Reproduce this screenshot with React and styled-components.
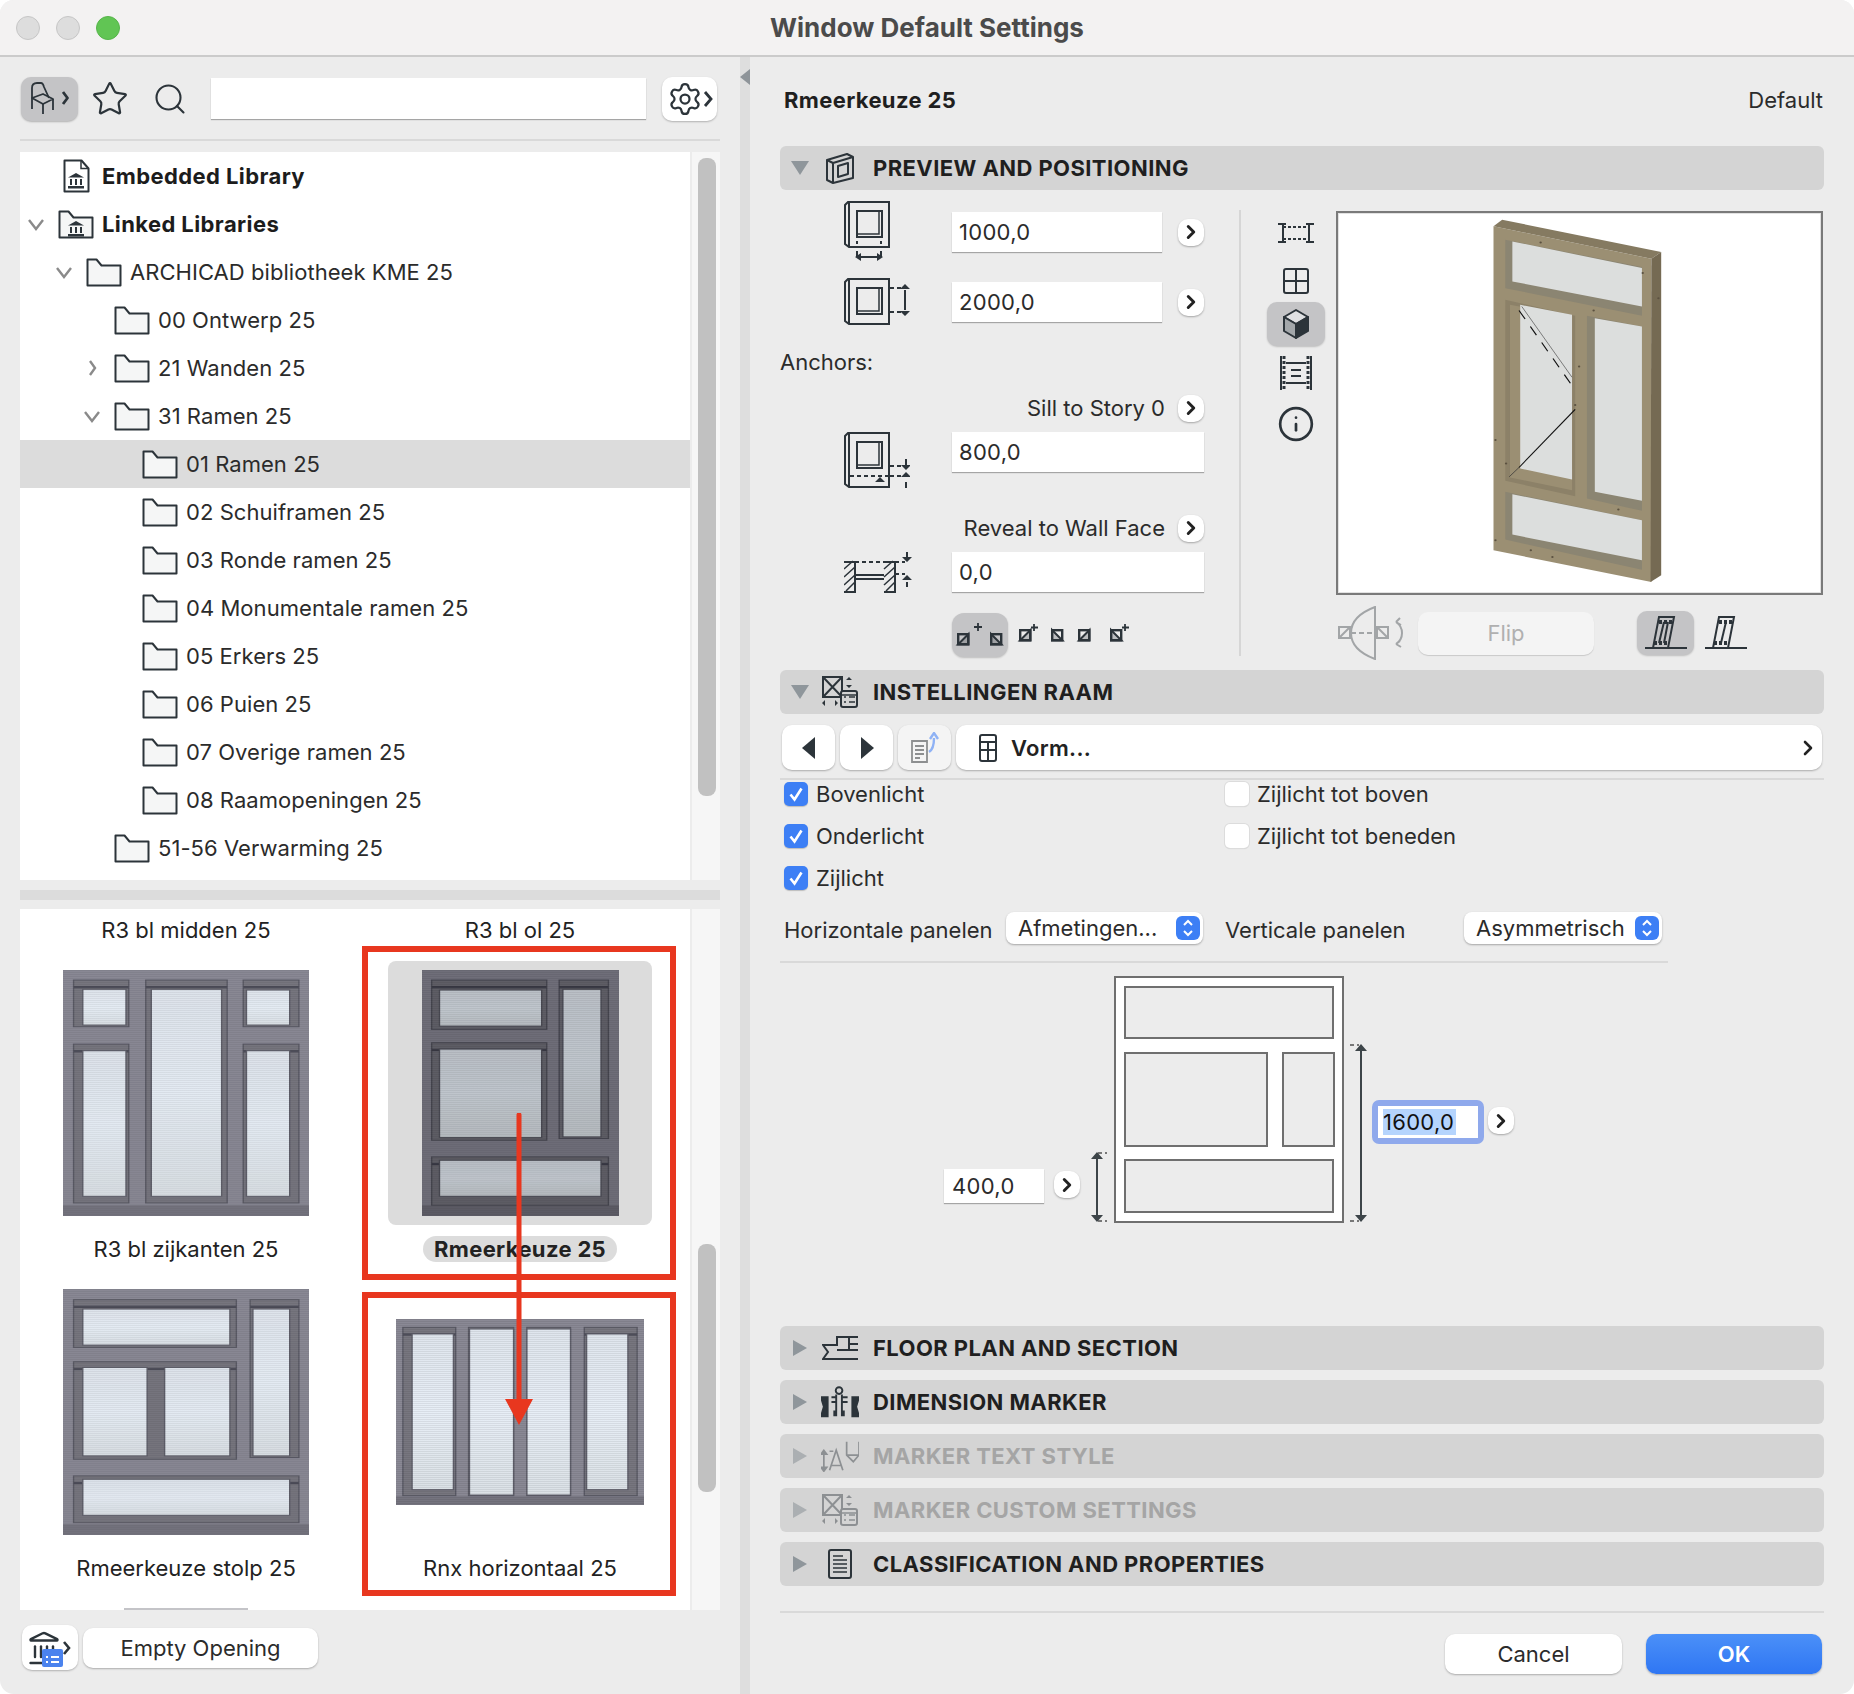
import React from 'react';
import styled, { createGlobalStyle } from 'styled-components';
import { Star, Search, Settings, ChevronRight, Info, Landmark } from 'lucide-react';

const INK = '#2c343a';

const GlobalStyle = createGlobalStyle`
  html, body { margin: 0; padding: 0; background: #fff; }
  body { font-family: Inter, "Noto Sans", "Liberation Sans", sans-serif; color: #262626; }
  * { box-sizing: border-box; }
`;

const Win = styled.div`
  width: 1854px;
  height: 1694px;
  background: #ececec;
  border-radius: 14px;
  overflow: hidden;
  display: flex;
  flex-direction: column;
`;

const TitleBar = styled.header`
  height: 57px;
  flex: none;
  display: grid;
  grid-template-columns: 1fr auto 1fr;
  align-items: center;
  padding: 0 16px;
  background: #f3f2f2;
  border-bottom: 2px solid #cbcbcb;
`;

const Lights = styled.div`
  display: flex;
  gap: 16px;
`;

const Light = styled.span`
  width: 24px;
  height: 24px;
  border-radius: 50%;
  background: ${(p) => (p.$green ? '#61c554' : '#dddddd')};
  border: 1px solid ${(p) => (p.$green ? '#56b54a' : '#c6c6c6')};
`;

const WinTitle = styled.h1`
  margin: 0;
  font-size: 26px;
  font-weight: 700;
  color: #4b4b4b;
`;

const Main = styled.div`
  flex: 1;
  display: flex;
  min-height: 0;
`;

const LeftPanel = styled.aside`
  width: 740px;
  flex: none;
  padding: 20px 20px 0;
  display: flex;
  flex-direction: column;
`;

const Toolbar = styled.div`
  display: flex;
  align-items: center;
  height: 43px;
`;

const IconButton = styled.div`
  flex: none;
  display: flex;
  align-items: center;
  justify-content: center;
  width: ${(p) => p.$w || 58}px;
  height: ${(p) => p.$h || 44}px;
  margin-left: ${(p) => p.$ml || 0}px;
  border-radius: 10px;
  background: ${(p) => (p.$on ? '#c4c4c6' : '#fff')};
  box-shadow: 0 1px 2px rgba(0, 0, 0, 0.25);
`;

const ToolSlot = styled.div`
  flex: none;
  width: ${(p) => p.$w}px;
  display: flex;
  justify-content: center;
  color: ${INK};
`;

const SearchField = styled.input`
  flex: none;
  width: 435px;
  height: 41px;
  margin: 0 16px 0 13px;
  border: 0;
  background: #fff;
  box-shadow: 0 1px 1px rgba(0, 0, 0, 0.3);
`;

const Rule = styled.div`
  height: 2px;
  background: #d9d9d9;
  width: ${(p) => p.$w || '100%'};
  margin-top: ${(p) => p.$mt || 0}px;
  flex: none;
`;

const ListBlock = styled.div`
  display: flex;
  flex: none;
  height: ${(p) => p.$h}px;
  margin-top: ${(p) => p.$mt}px;
`;

const TreeList = styled.div`
  width: 670px;
  background: #fff;
`;

const TreeRowBox = styled.div`
  height: 48px;
  display: flex;
  align-items: center;
  padding-left: ${(p) => 8 + p.$level * 28}px;
  background: ${(p) => (p.$selected ? '#dcdcdc' : 'transparent')};
`;

const Twisty = styled.div`
  width: 30px;
  flex: none;
  display: flex;
`;

const TreeIcon = styled.div`
  width: 36px;
  margin-right: 8px;
  flex: none;
  display: flex;
  justify-content: center;
`;

const TreeLabel = styled.span`
  font-size: 22px;
  font-weight: ${(p) => (p.$bold ? 700 : 400)};
  letter-spacing: ${(p) => (p.$bold ? '0.4px' : '0.05px')};
  color: ${(p) => (p.$bold ? '#1c1c1c' : '#2b2b2b')};
  white-space: nowrap;
`;

const ScrollTrack = styled.div`
  width: 28px;
  margin-left: 2px;
  padding: 0 4px 0 6px;
  background: #f6f6f6;
`;

const ScrollThumb = styled.div`
  height: ${(p) => p.$h}px;
  margin-top: ${(p) => p.$top}px;
  border-radius: 8px;
  background: #c1c1c1;
`;

const Band = styled.div`
  height: 10px;
  flex: none;
  margin-top: 10px;
  background: #dcdcdc;
`;

const GridPanel = styled.div`
  position: relative;
  width: 670px;
  overflow: hidden;
  background: #fff;
  padding-top: 8px;
  display: grid;
  grid-template-columns: 332px 336px;
  row-gap: 18px;
  align-content: start;
`;

const Cell = styled.div`
  display: flex;
  flex-direction: column;
  align-items: center;
`;

const ThumbArea = styled.div`
  width: 264px;
  height: 264px;
  margin-bottom: 11px;
  border-radius: 8px;
  display: flex;
  align-items: center;
  justify-content: center;
  background: ${(p) => (p.$selected ? '#dcdcdc' : 'transparent')};
`;

const Caption = styled.span`
  height: 26px;
  line-height: 27px;
  padding: 0 11px;
  border-radius: 13px;
  font-size: 22px;
  white-space: nowrap;
  font-weight: ${(p) => (p.$selected ? 700 : 400)};
  letter-spacing: ${(p) => (p.$selected ? '0.35px' : '0')};
  background: ${(p) => (p.$selected ? '#dcdcdc' : 'transparent')};
  color: #222;
`;

const ThumbSvg = styled.svg`
  filter: ${(p) => (p.$dark ? 'brightness(0.82) contrast(1.08)' : 'none')};
`;

const PeekThumb = styled.div`
  width: 124px;
  height: 3px;
  margin-top: 9px;
  background: #c4c4c8;
`;

const RedBox = styled.div`
  position: absolute;
  left: 342px;
  top: ${(p) => p.$top}px;
  width: 314px;
  height: ${(p) => p.$h}px;
  border: 6px solid #e8371f;
`;

const RedArrow = styled.svg`
  position: absolute;
  left: 485px;
  top: 204px;
`;

const BottomBar = styled.div`
  display: flex;
  align-items: center;
  gap: 5px;
  margin-top: 15px;
  padding-left: 2px;
`;

const PlainButton = styled.div`
  flex: none;
  width: ${(p) => p.$w}px;
  height: 40px;
  display: flex;
  align-items: center;
  justify-content: center;
  border-radius: 10px;
  background: #fff;
  box-shadow: 0 1px 2px rgba(0, 0, 0, 0.28);
  font-size: 22px;
  color: #2b2b2b;
`;

const Splitter = styled.div`
  width: 10px;
  flex: none;
  background: #dedede;
  padding-top: 12px;
`;

const SplitterArrow = styled.div`
  width: 0;
  height: 0;
  border-top: 8px solid transparent;
  border-bottom: 8px solid transparent;
  border-right: 10px solid #8e9499;
`;

const RightPanel = styled.main`
  flex: 1;
  padding: 21px 30px 0;
  min-width: 0;
`;

const TopRow = styled.div`
  height: 44px;
  display: flex;
  align-items: center;
  justify-content: space-between;
  padding: 0 1px 0 4px;
  margin-bottom: 24px;
`;

const ElementName = styled.span`
  font-size: 22px;
  font-weight: 700;
  letter-spacing: 0.35px;
  color: #1f1f1f;
`;

const DefaultTag = styled.span`
  font-size: 22px;
  color: #2b2b2b;
`;

const SectionBar = styled.div`
  height: 44px;
  display: flex;
  align-items: center;
  border-radius: 6px;
  background: #d4d4d4;
  margin-top: ${(p) => p.$mt || 0}px;
`;

const Triangle = styled.span`
  flex: none;
  width: 0;
  height: 0;
  ${(p) =>
    p.$open
      ? `margin-left: 11px; margin-right: 13px;
         border-left: 9px solid transparent; border-right: 9px solid transparent;
         border-top: 14px solid #8f969b;`
      : `margin-left: 13px; margin-right: 15px;
         border-top: 8px solid transparent; border-bottom: 8px solid transparent;
         border-left: 14px solid #8f969b;`}
  opacity: ${(p) => (p.$off ? 0.6 : 1)};
`;

const SectionIcon = styled.div`
  width: 38px;
  flex: none;
  margin-right: 14px;
  margin-left: -1px;
  display: flex;
  justify-content: center;
  opacity: ${(p) => (p.$off ? 0.42 : 1)};
`;

const SectionTitle = styled.span`
  font-size: 22px;
  font-weight: 700;
  letter-spacing: 0.42px;
  white-space: nowrap;
  color: ${(p) => (p.$off ? '#a5a5a5' : '#1f1f1f')};
`;

const PreviewBody = styled.div`
  height: 480px;
  display: flex;
`;

const FieldsColumn = styled.div`
  width: 459px;
  flex: none;
  display: flex;
  flex-direction: column;
  padding-top: 11px;
`;

const FieldRow = styled.div`
  display: flex;
  align-items: ${(p) => p.$align || 'center'};
  height: ${(p) => p.$h}px;
  margin-top: ${(p) => p.$mt || 0}px;
  padding-left: 64px;
`;

const FieldIcon = styled.div`
  width: 108px;
  flex: none;
  display: flex;
`;

const ValueField = styled.div`
  flex: none;
  width: ${(p) => p.$w}px;
  height: ${(p) => p.$h || 40}px;
  padding: 0 ${(p) => p.$pad || 7}px;
  display: flex;
  align-items: center;
  background: #fff;
  box-shadow: 0 1px 1px rgba(0, 0, 0, 0.3);
  font-size: 22px;
  letter-spacing: 0.3px;
  color: #2b2b2b;
`;

const RoundChevron = styled.div`
  flex: none;
  width: 26px;
  height: 27px;
  margin-left: ${(p) => p.$ml || 0}px;
  display: flex;
  align-items: center;
  justify-content: center;
  border-radius: 10px;
  background: #fff;
  color: #222;
  box-shadow: 0 1px 2px rgba(0, 0, 0, 0.3);
`;

const PlainLabel = styled.div`
  font-size: 22px;
  color: #2b2b2b;
  height: 24px;
  line-height: 24px;
  margin-top: 24px;
`;

const AnchorLabelRow = styled.div`
  display: flex;
  align-items: center;
  justify-content: flex-end;
  height: 28px;
  margin-top: ${(p) => p.$mt}px;
  width: 424px;
  font-size: 22px;
  color: #2b2b2b;
`;

const AnchorButtons = styled.div`
  display: flex;
  align-items: center;
  margin: 21px 0 0 172px;
  height: 44px;
`;

const AnchorOn = styled.div`
  width: 56px;
  height: 44px;
  display: flex;
  align-items: center;
  justify-content: center;
  background: #c4c4c6;
  border-radius: 12px;
  box-shadow: 0 1px 2px rgba(0, 0, 0, 0.2);
  margin-right: 2px;
`;

const AnchorSlot = styled.div`
  width: ${(p) => p.$w}px;
  margin-left: ${(p) => p.$ml || 0}px;
  display: flex;
  justify-content: center;
`;

const VerticalRule = styled.div`
  width: 2px;
  height: 446px;
  margin-top: 20px;
  background: #d6d6d6;
  flex: none;
`;

const PreviewSide = styled.div`
  flex: 1;
  padding: 21px 0 0 26px;
`;

const PreviewTop = styled.div`
  display: flex;
  gap: 11px;
`;

const ViewStrip = styled.div`
  width: 58px;
  flex: none;
`;

const ViewSlot = styled.div`
  height: 44px;
  width: ${(p) => (p.$w ? `${p.$w}px` : 'auto')};
  margin-top: ${(p) => p.$mt || 0}px;
  display: flex;
  align-items: center;
  justify-content: center;
  border-radius: 10px;
  color: ${INK};
  background: ${(p) => (p.$on ? '#c4c4c6' : 'transparent')};
  box-shadow: ${(p) => (p.$on ? '0 1px 2px rgba(0,0,0,.2)' : 'none')};
`;

const PreviewBox = styled.div`
  width: 487px;
  height: 384px;
  border: 2px solid #7a7a7a;
  background: #fff;
  box-shadow: inset 0 0 0 1px #e2e2e2;
  flex: none;
`;

const FlipRow = styled.div`
  display: flex;
  align-items: center;
  height: 54px;
  margin: 11px 0 0 71px;
`;

const FlipButton = styled.div`
  width: 176px;
  height: 43px;
  margin: 0 43px 0 14px;
  display: flex;
  align-items: center;
  justify-content: center;
  border-radius: 10px;
  background: #f4f4f4;
  box-shadow: 0 1px 1px rgba(0, 0, 0, 0.15);
  color: #b0b0b0;
  font-size: 22px;
`;

const NavRow = styled.div`
  display: flex;
  gap: 5px;
  height: 45px;
  margin-top: 11px;
  padding: 0 2px;
`;

const NavButton = styled.div`
  width: 53px;
  flex: none;
  display: flex;
  align-items: center;
  justify-content: center;
  border-radius: 10px;
  background: ${(p) => (p.$dim ? '#f4f4f4' : '#fff')};
  box-shadow: 0 1px 2px rgba(0, 0, 0, 0.28);
`;

const NavWide = styled.div`
  flex: 1;
  display: flex;
  align-items: center;
  padding: 0 2px 0 23px;
  border-radius: 10px;
  background: #fff;
  box-shadow: 0 1px 2px rgba(0, 0, 0, 0.28);
  font-size: 22px;
  font-weight: 600;
  letter-spacing: 0.3px;
  color: #222;
`;

const NavWideText = styled.span`
  flex: 1;
  margin-left: 14px;
`;

const CheckGrid = styled.div`
  display: grid;
  grid-template-columns: 441px 1fr;
  grid-auto-rows: 24px;
  row-gap: 18px;
  margin-top: 2px;
  padding-left: 4px;
`;

const CheckRow = styled.label`
  display: flex;
  align-items: center;
  gap: 8px;
  font-size: 22px;
  color: #2b2b2b;
`;

const CheckBox = styled.span`
  width: 24px;
  height: 24px;
  flex: none;
  border-radius: 5px;
  display: flex;
  align-items: center;
  justify-content: center;
  background: ${(p) => (p.$on ? '#3d7ff5' : '#fff')};
  box-shadow: ${(p) => (p.$on ? '0 1px 1px rgba(0,0,0,.2)' : '0 0 0 1px #dcdcdc, 0 1px 1px rgba(0,0,0,.15)')};
`;

const PanelsRow = styled.div`
  display: flex;
  align-items: flex-start;
  height: 32px;
  margin-top: 22px;
  padding-left: 4px;
`;

const PanelsLabel = styled.span`
  width: ${(p) => p.$w}px;
  flex: none;
  padding-top: 5px;
  font-size: 22px;
  white-space: nowrap;
  color: #2b2b2b;
`;

const SelectBox = styled.div`
  flex: none;
  width: ${(p) => p.$w}px;
  height: 32px;
  margin-right: 22px;
  display: flex;
  align-items: center;
  justify-content: space-between;
  padding: 0 3px 0 12px;
  border-radius: 8px;
  background: #fff;
  box-shadow: 0 1px 2px rgba(0, 0, 0, 0.3);
  font-size: 22px;
  color: #2b2b2b;
  white-space: nowrap;
`;

const Stepper = styled.span`
  width: 24px;
  height: 24px;
  flex: none;
  display: flex;
  align-items: center;
  justify-content: center;
  border-radius: 6px;
  background: #3d7ff5;
`;

const DiagramCanvas = styled.div`
  position: relative;
  height: 363px;
`;

const DiagramArt = styled.svg`
  position: absolute;
  left: 0;
  top: 0;
`;

const CanvasItem = styled.div`
  position: absolute;
  left: ${(p) => p.$x}px;
  top: ${(p) => p.$y}px;
`;

const FocusRing = styled.div`
  width: 112px;
  height: 44px;
  padding: 6px;
  border-radius: 7px;
  background: #8fa9ec;
`;

const FocusInner = styled.div`
  height: 100%;
  padding-left: 5px;
  display: flex;
  align-items: center;
  background: #fff;
  font-size: 22px;
`;

const SelectedText = styled.span`
  background: #b5d4fd;
  color: #111;
  padding-right: 2px;
  letter-spacing: 0.3px;
`;

const SectionStack = styled.div`
  display: flex;
  flex-direction: column;
  gap: 10px;
`;

const Footer = styled.div`
  display: flex;
  justify-content: flex-end;
  gap: 24px;
  margin-top: 21px;
  padding-right: 2px;
`;

const CancelButton = styled.div`
  width: 177px;
  height: 40px;
  display: flex;
  align-items: center;
  justify-content: center;
  border-radius: 10px;
  background: #fff;
  box-shadow: 0 1px 2px rgba(0, 0, 0, 0.28);
  font-size: 22px;
  color: #2b2b2b;
`;

const OkButton = styled(CancelButton)`
  width: 176px;
  background: linear-gradient(#4b90f8, #2f76f3);
  color: #fff;
  font-weight: 600;
`;

const LibraryWrap = styled.div`
  position: relative;
  display: flex;
  align-items: center;
  margin-left: -2px;
`;

const LibraryCard = styled.svg`
  position: absolute;
  left: 16px;
  top: 19px;
`;

const Chevron = ({ dir }) => (
  <svg width="16" height="16" viewBox="0 0 16 16" fill="none" stroke="#8a8a8a" strokeWidth="2.400">
    {dir === 'down' ? <path d="M1 4l7 9 7-9" /> : <path d="M6 1l5 7-5 7" />}
  </svg>
);

const BankMark = ({ x, y }) => (
  <g transform={`translate(${x} ${y})`} fill={INK} stroke="none">
    <path d="M8 0l8 4.500H0z" />
    <rect x="2" y="6" width="2" height="6" />
    <rect x="7" y="6" width="2" height="6" />
    <rect x="12" y="6" width="2" height="6" />
    <rect x="0" y="13" width="16" height="2.500" />
  </g>
);

const FolderIcon = ({ bank }) => (
  <svg width="36" height="29" viewBox="0 0 36 29">
    <path
      d="M1.500 27.500V1.500h9l5 6h19v20z"
      fill="#f5f6f6"
      stroke={INK}
      strokeWidth="2"
      strokeLinejoin="round"
    />
    {bank && <BankMark x={10} y={11} />}
  </svg>
);

const DocBankIcon = () => (
  <svg width="27" height="34" viewBox="0 0 27 34">
    <path d="M1.500 1.500h17l7 8v23h-24z" fill="#fff" stroke={INK} strokeWidth="2" strokeLinejoin="round" />
    <path d="M18 1.500v8h7.500" fill="none" stroke={INK} strokeWidth="1.500" />
    <BankMark x={5} y={14} />
  </svg>
);

const ChairIcon = () => (
  <svg width="40" height="33" viewBox="0 0 40 33" fill="none" stroke={INK} strokeWidth="1.800" strokeLinejoin="round">
    <path d="M2 27V6q0-5 5-5h4q2 0 3 4l5 11" />
    <path d="M2 16l11-4 10 5-10 5z" />
    <path d="M13 22v10M23 17v11" />
    <path d="M33 10l4.500 6-4.500 6" strokeWidth="2.800" />
  </svg>
);

const GearMore = () => (
  <>
    <Settings size={36} strokeWidth={1.5} color={INK} />
    <svg width="10" height="18" viewBox="0 0 10 18" fill="none" stroke={INK} strokeWidth="2.800">
      <path d="M2 2l6 7-6 7" />
    </svg>
  </>
);

const BoxShape = ({ h = 46 }) => (
  <g fill="none" stroke={INK} strokeWidth="2">
    <path d={`M1 4l3-3h41v${h - 1}H5l-4-3z`} />
    <path d={`M5 1v${h - 1}`} />
    <rect x="13" y="10" width="25" height="26" />
    <path d="M14 33h21V11" strokeWidth="1.500" />
  </g>
);

const WidthIcon = () => (
  <svg width="46" height="62" viewBox="0 0 46 62">
    <BoxShape />
    <g stroke={INK} strokeWidth="2" fill="none">
      <path d="M13 40v3M37 40v3M13 50v6M37 50v6M15 56h20" />
    </g>
    <path d="M11 56l6-4v8zM39 56l-6-4v8z" fill={INK} />
  </svg>
);

const HeightIcon = () => (
  <svg width="66" height="48" viewBox="0 0 66 48">
    <BoxShape />
    <g stroke={INK} strokeWidth="2" fill="none">
      <path d="M46 10h14M46 34h14" strokeDasharray="4 3" />
      <path d="M61 12v20" />
    </g>
    <path d="M61 6l-5 5h10zM61 38l-5-5h10z" fill={INK} />
  </svg>
);

const SillIcon = () => (
  <svg width="66" height="56" viewBox="0 0 66 56">
    <g fill="none" stroke={INK} strokeWidth="2">
      <path d="M1 4l3-3h41v54H5l-4-3z" />
      <path d="M5 1v54" />
      <rect x="13" y="10" width="25" height="26" />
      <path d="M14 33h21V11" strokeWidth="1.500" />
      <path d="M6 44h38M46 34h12M46 44h12" strokeDasharray="4 3" />
      <path d="M62 27v6M62 50v6" />
    </g>
    <path d="M62 38l-5-5h10zM62 40l-5 5h10zM31 50l5-5 5 5z" fill={INK} />
  </svg>
);

const RevealIcon = () => (
  <svg width="68" height="42" viewBox="0 0 68 42">
    <g fill="none" stroke={INK} strokeWidth="2">
      <path d="M0 11h11v30H0M40 11h11v30H40M11 24h29M11 28h29" />
      <path d="M0 18l9-8M0 26l11-10M0 34l11-10M2 40l9-9M40 18l9-8M40 26l11-10M40 34l11-10M42 40l9-9" strokeWidth="1.500" />
      <path d="M11 11h29M51 11h10M51 23h10" strokeDasharray="4 3" />
      <path d="M63 1v5M63 31v5" />
    </g>
    <path d="M63 11l-5-5h10zM63 24l-5 5h10z" fill={INK} />
  </svg>
);

const HatchSquare = ({ x, flip }) => (
  <g transform={`translate(${x} 0)`} stroke={INK} strokeWidth="2.400" fill="none">
    <rect x="1.200" y="1.200" width="10" height="10" />
    <path d={flip ? 'M1 11.500L11.500 1L11.500 11.500z' : 'M1 1l10.500 10.500H1z'} fill={INK} fillOpacity="0.25" strokeWidth="2" />
  </g>
);

const AnchorPair = () => (
  <svg width="50" height="24" viewBox="0 0 50 24">
    <g transform="translate(2 10)">
      <HatchSquare x={0} flip />
      <HatchSquare x={33} />
    </g>
    <path d="M23 0v8M19 4h8" stroke={INK} strokeWidth="1.800" />
  </svg>
);

const AnchorSmall = ({ spark, flip }) => (
  <svg width="22" height="22" viewBox="0 0 22 22">
    <g transform="translate(3 5)">
      <HatchSquare x={0} flip={flip} />
    </g>
    {spark && <path d="M18 0v7M15 3.500h7" stroke={INK} strokeWidth="1.800" />}
  </svg>
);

const CropIcon = () => (
  <svg width="36" height="20" viewBox="0 0 36 20" fill="none" stroke={INK} strokeWidth="2">
    <path d="M0 1h8M28 1h8M0 19h8M28 19h8M5 1v18M31 1v18" />
    <path d="M5 4h26M5 16h26" strokeDasharray="3 2" />
  </svg>
);

const GridIcon = () => (
  <svg width="26" height="26" viewBox="0 0 26 26" fill="none" stroke={INK} strokeWidth="2">
    <rect x="1" y="1" width="24" height="24" rx="2" />
    <path d="M13 1v24M1 13h24" />
  </svg>
);

const CubeIcon = () => (
  <svg width="26" height="30" viewBox="0 0 26 30" stroke={INK} strokeWidth="2" strokeLinejoin="round">
    <path d="M13 1l12 7-12 7L1 8z" fill="#dfe0e2" />
    <path d="M1 8l12 7v14L1 22z" fill="#a3a7aa" />
    <path d="M25 8l-12 7v14l12-7z" fill={INK} />
  </svg>
);

const FilmIcon = () => (
  <svg width="34" height="34" viewBox="0 0 34 34" fill="none" stroke={INK} strokeWidth="2">
    <path d="M2 0v34M32 0v34M7 7h20M7 27h20M12 14h10M12 20h10" />
    <path d="M5 0v34M29 0v34" strokeDasharray="3 2" strokeWidth="3" />
  </svg>
);

const knots = [
  [770, 158], [905, 362], [868, 530], [655, 750], [682, 820], [968, 958],
  [745, 1080], [800, 1100], [1030, 250], [1070, 325], [655, 1050], [858, 645],
];

const Window3D = () => (
  <svg width="483" height="380" viewBox="254 70 1230 1138" preserveAspectRatio="none">
    <polygon points="650,110 1052,207 1052,1175 650,1080" fill="#9b8f73" />
    <polygon points="650,110 672,90 1077,187 1052,207" fill="#857a61" />
    <polygon points="1052,207 1077,187 1077,1155 1050,1175" fill="#756a53" />
    <polygon points="680,150 1028,232 1028,378 680,295" fill="#8b8572" />
    <polygon points="698,155 1028,235 1028,350 698,275" fill="#dcdedd" />
    <polygon points="680,330 858,378 858,918 680,872" fill="#8c8168" />
    <polygon points="692,345 850,378 850,900 692,862" fill="#9b8f73" />
    <polygon points="718,345 850,375 850,868 718,835" fill="#dcdedd" />
    <polygon points="888,378 1028,410 1028,962 888,925" fill="#8b8572" />
    <polygon points="908,385 1028,410 1028,932 908,905" fill="#dcdedd" />
    <polygon points="680,905 1028,990 1028,1138 680,1048" fill="#8b8572" />
    <polygon points="698,912 1028,990 1028,1110 698,1033" fill="#dcdedd" />
    {knots.map(([cx, cy]) => (
      <circle key={`${cx}-${cy}`} cx={cx} cy={cy} r="3" fill="#5b5140" />
    ))}
    <path d="M722 350L850 562" stroke="#555" strokeWidth="2" />
    <path d="M715 362L858 600" stroke="#111" strokeWidth="3" strokeDasharray="30 26" />
    <path d="M858 658L715 832" stroke="#111" strokeWidth="3" />
    <path d="M715 832L690 860" stroke="#333" strokeWidth="2" />
  </svg>
);

const FlipIcon = () => (
  <svg width="66" height="54" viewBox="0 0 66 54" fill="none" stroke="#a2a5a7" strokeWidth="2">
    <path d="M37 1Q13 10 13 27t24 26z" />
    <path d="M13 27h24" strokeDasharray="5 3" />
    <rect x="1" y="21" width="11" height="11" />
    <path d="M1 32l11-11" />
    <rect x="39" y="21" width="11" height="11" />
    <path d="M39 21l11 11" />
    <path d="M58 16q6 4 6 11t-6 11M58 16l4-4M58 16l5 3M58 38l5 3M58 38l4-3" />
  </svg>
);

const SlantIcon = ({ split }) => (
  <svg width="42" height="34" viewBox="0 0 42 34" fill="none" stroke={INK} strokeWidth="2">
    <path d="M0 32h42" />
    <path d="M14 1h15l-6 31H8z" />
    <path d="M14 6h15M9 27h15" strokeDasharray="3 2" strokeWidth="4" />
    <path d={split ? 'M19 6l-5 21M23 6l-4 21' : 'M21 6l-5 21'} />
  </svg>
);

const PreviewMark = () => (
  <svg width="28" height="31" viewBox="0 0 28 31" fill="none" stroke={INK} strokeWidth="2" strokeLinejoin="round">
    <path d="M1 7l20-6 6 3v21L7 30l-6-3z" />
    <path d="M7 10l20-6M7 10v20M1 7l6 3" />
    <path d="M12 13l10-3v11l-10 3z" />
  </svg>
);

const SettingsMark = () => (
  <svg width="36" height="32" viewBox="0 0 36 32" fill="none" stroke={INK} strokeWidth="2">
    <rect x="1" y="1" width="19" height="20" />
    <path d="M1 1l19 20M20 1L1 21" />
    <rect x="19" y="15" width="16" height="16" rx="2" fill="#d4d4d4" />
    <path d="M22 21h2M27 21h6M22 26h2M27 26h6M19 19h16" strokeWidth="1.600" />
    <path d="M27 1l3 3h-6zM27 12l3-3h-6zM3 24l-3 3 3 3zM13 24l3 3-3 3z" fill={INK} stroke="none" />
  </svg>
);

const FloorMark = () => (
  <svg width="37" height="24" viewBox="0 0 37 24" fill="none" stroke={INK} strokeWidth="2">
    <path d="M36 1H15v8H1l5 7-5 7h35" />
    <path d="M15 14h12V1M27 8h9M27 14h9" />
  </svg>
);

const DimensionMark = () => (
  <svg width="40" height="32" viewBox="0 0 40 32" fill="none" stroke={INK} strokeWidth="2">
    <circle cx="19" cy="4" r="3.500" />
    <path d="M16 8v23M22 8v23M11 11h4M11 16h4M23 11h5M23 16h5M14 25v6M24 25v6" />
    <path d="M0 11h7v20H0l3-10zM40 11h-7v20h7l-3-10z" fill={INK} />
  </svg>
);

const TextMark = () => (
  <svg width="40" height="32" viewBox="0 0 40 32" fill="none" stroke={INK} strokeWidth="1.800">
    <path d="M3 11v20M9 11h4" />
    <path d="M3 10L0 14h6zM3 32L0 28h6z" fill={INK} />
    <path d="M9 31l7-21 7 21M11 26h10" />
    <path d="M27 1v14l7 7 6-7V1M27 15h13" />
  </svg>
);

const DocMark = () => (
  <svg width="24" height="30" viewBox="0 0 24 30" fill="none" stroke={INK} strokeWidth="2">
    <rect x="1" y="1" width="22" height="28" rx="2" />
    <path d="M5 7h10M5 11h14M5 15h14M5 19h14M5 23h14" strokeWidth="1.600" />
  </svg>
);

const LibraryGlyph = () => (
  <LibraryWrap>
    <Landmark size={36} strokeWidth={1.6} color={INK} />
    <LibraryCard width="21" height="18" viewBox="0 0 21 18">
      <rect width="21" height="18" rx="2" fill="#4b83ee" />
      <path d="M4 8h2M9 8h8M4 13h2M9 13h8" stroke="#fff" strokeWidth="2" />
    </LibraryCard>
    <svg width="10" height="16" viewBox="0 0 10 16" fill="none" stroke={INK} strokeWidth="2.600">
      <path d="M2 2l5 6-5 6" />
    </svg>
  </LibraryWrap>
);

const MORE = <ChevronRight size={22} strokeWidth={3.2} />;

const treeRows = [
  { label: 'Embedded Library', level: 0, icon: 'doc', bold: true },
  { label: 'Linked Libraries', level: 0, icon: 'bank', bold: true, dir: 'down' },
  { label: 'ARCHICAD bibliotheek KME 25', level: 1, dir: 'down' },
  { label: '00 Ontwerp 25', level: 2 },
  { label: '21 Wanden 25', level: 2, dir: 'right' },
  { label: '31 Ramen 25', level: 2, dir: 'down' },
  { label: '01 Ramen 25', level: 3, selected: true },
  { label: '02 Schuiframen 25', level: 3 },
  { label: '03 Ronde ramen 25', level: 3 },
  { label: '04 Monumentale ramen 25', level: 3 },
  { label: '05 Erkers 25', level: 3 },
  { label: '06 Puien 25', level: 3 },
  { label: '07 Overige ramen 25', level: 3 },
  { label: '08 Raamopeningen 25', level: 3 },
  { label: '51-56 Verwarming 25', level: 2 },
];

// coordinates follow the crops of each thumbnail: [sash, ...glass panes]
const thumbs = {
  sides: {
    box: [135, 210, 535, 737],
    base: 915,
    sashes: [
      [[158, 240, 120, 140], [178, 268, 94, 107]],
      [[158, 432, 120, 476], [178, 452, 94, 436]],
      [[315, 240, 177, 668], [327, 268, 153, 620]],
      [[527, 240, 121, 140], [534, 270, 94, 105]],
      [[527, 432, 121, 476], [534, 452, 94, 436]],
    ],
  },
  choice: {
    box: [917, 210, 428, 737],
    base: 915,
    sashes: [
      [[938, 240, 250, 148], [955, 270, 222, 108]],
      [[1215, 240, 107, 475], [1223, 268, 83, 442]],
      [[938, 428, 250, 292], [955, 447, 222, 265]],
      [[938, 770, 384, 145], [955, 780, 351, 108]],
    ],
  },
  stolp: {
    box: [135, 30, 535, 737],
    base: 735,
    sashes: [
      [[158, 62, 354, 143], [178, 90, 320, 108]],
      [[542, 62, 106, 473], [548, 90, 80, 440]],
      [[158, 248, 354, 292], [178, 265, 140, 265], [356, 265, 142, 265]],
      [[158, 590, 490, 140], [178, 600, 450, 108]],
    ],
  },
  horizontal: {
    box: [860, 120, 540, 558],
    base: 652,
    sashes: [
      [[875, 145, 115, 505], [895, 165, 90, 467]],
      [[1018, 145, 98, 505], [1020, 150, 96, 498]],
      [[1145, 145, 95, 505], [1145, 150, 95, 498]],
      [[1270, 145, 115, 505], [1275, 165, 90, 467]],
    ],
  },
};

const WindowThumb = ({ kind, width, height, dark }) => {
  const { box, base, sashes } = thumbs[kind];
  const gradId = `glass-${kind}`;
  const stripeId = `stripe-${kind}`;
  return (
    <ThumbSvg width={width} height={height} viewBox={box.join(' ')} preserveAspectRatio="none" $dark={dark}>
      <defs>
        <linearGradient id={gradId} x1="0" y1="0" x2="0" y2="1">
          <stop offset="0" stopColor="#dfe5ed" />
          <stop offset="0.5" stopColor="#e7eef6" />
          <stop offset="1" stopColor="#dbe1e6" />
        </linearGradient>
        <pattern id={stripeId} width="8" height="6" patternUnits="userSpaceOnUse">
          <rect width="8" height="3" fill="#000" fillOpacity="0.07" />
        </pattern>
      </defs>
      <rect x={box[0]} y={box[1]} width={box[2]} height={box[3]} fill="#8a8995" />
      <rect x={box[0]} y={base} width={box[2]} height={box[1] + box[3] - base} fill="#75747f" />
      {sashes.map(([sash, ...panes], i) => (
        <g key={i}>
          <rect x={sash[0]} y={sash[1]} width={sash[2]} height={sash[3]} fill="#77767f" stroke="#5b5b66" strokeWidth="3" />
          <rect x={sash[0]} y={sash[1] + 18} width={sash[2]} height="7" fill="#4e4e5a" />
          {panes.map((g, j) => (
            <rect key={j} x={g[0]} y={g[1]} width={g[2]} height={g[3]} fill={`url(#${gradId})`} stroke="#5f5f6a" strokeWidth="3" />
          ))}
        </g>
      ))}
      <rect x={box[0]} y={box[1]} width={box[2]} height={box[3]} fill={`url(#${stripeId})`} />
    </ThumbSvg>
  );
};

const sectionsBelow = [
  { title: 'FLOOR PLAN AND SECTION', icon: <FloorMark /> },
  { title: 'DIMENSION MARKER', icon: <DimensionMark /> },
  { title: 'MARKER TEXT STYLE', icon: <TextMark />, off: true },
  { title: 'MARKER CUSTOM SETTINGS', icon: <SettingsMark />, off: true },
  { title: 'CLASSIFICATION AND PROPERTIES', icon: <DocMark /> },
];

const Tick = () => (
  <svg width="16" height="16" viewBox="0 0 16 16" fill="none" stroke="#fff" strokeWidth="2.600">
    <path d="M2.500 8.500l4 5 7-11" />
  </svg>
);

const StepperMark = () => (
  <Stepper>
    <svg width="12" height="20" viewBox="0 0 12 20" fill="none" stroke="#fff" strokeWidth="2">
      <path d="M2 7l4-4 4 4M2 13l4 4 4-4" />
    </svg>
  </Stepper>
);

const Diagram = () => (
  <DiagramArt width="1044" height="363" viewBox="0 0 1044 363">
    <rect x="335" y="14" width="228" height="245" fill="#fff" stroke="#6f6f6f" strokeWidth="2" />
    <g fill="#ececec" stroke="#6f6f6f" strokeWidth="2">
      <rect x="345" y="24" width="208" height="51" />
      <rect x="345" y="90" width="142" height="93" />
      <rect x="503" y="90" width="51" height="93" />
      <rect x="345" y="197" width="208" height="52" />
    </g>
    <g stroke="#3d4549" strokeWidth="2" fill="none">
      <path d="M317 196v60M581 88v168" />
      <path d="M318 190h9M318 258h9M570 82h9M570 258h9" strokeDasharray="4 3" stroke="#777" />
    </g>
    <path d="M317 189l-6 7h12zM317 259l-6-7h12zM581 81l-6 7h12zM581 259l-6-7h12z" fill="#3d4549" />
  </DiagramArt>
);

export default function App() {
  return (
    <>
      <GlobalStyle />
      <Win>
        <TitleBar>
          <Lights>
            <Light />
            <Light />
            <Light $green />
          </Lights>
          <WinTitle>Window Default Settings</WinTitle>
          <span />
        </TitleBar>
        <Main>
          <LeftPanel>
            <Toolbar>
              <IconButton $on $ml={1} $w={57}>
                <ChairIcon />
              </IconButton>
              <ToolSlot $w={64}>
                <Star size={38} strokeWidth={1.4} />
              </ToolSlot>
              <ToolSlot $w={56}>
                <Search size={36} strokeWidth={1.4} />
              </ToolSlot>
              <SearchField />
              <IconButton $w={55}>
                <GearMore />
              </IconButton>
            </Toolbar>
            <Rule $mt={19} />
            <ListBlock $h={728} $mt={11}>
              <TreeList>
                {treeRows.map((row) => (
                  <TreeRowBox key={row.label} $level={row.level} $selected={row.selected}>
                    <Twisty>{row.dir && <Chevron dir={row.dir} />}</Twisty>
                    <TreeIcon>
                      {row.icon === 'doc' ? <DocBankIcon /> : <FolderIcon bank={row.icon === 'bank'} />}
                    </TreeIcon>
                    <TreeLabel $bold={row.bold}>{row.label}</TreeLabel>
                  </TreeRowBox>
                ))}
              </TreeList>
              <ScrollTrack>
                <ScrollThumb $top={6} $h={638} />
              </ScrollTrack>
            </ListBlock>
            <Band />
            <ListBlock $h={701} $mt={9}>
              <GridPanel>
                <Cell>
                  <Caption>R3 bl midden 25</Caption>
                </Cell>
                <Cell>
                  <Caption>R3 bl ol 25</Caption>
                </Cell>
                <Cell>
                  <ThumbArea>
                    <WindowThumb kind="sides" width={246} height={246} />
                  </ThumbArea>
                  <Caption>R3 bl zijkanten 25</Caption>
                </Cell>
                <Cell>
                  <ThumbArea $selected>
                    <WindowThumb kind="choice" width={197} height={246} dark />
                  </ThumbArea>
                  <Caption $selected>Rmeerkeuze 25</Caption>
                </Cell>
                <Cell>
                  <ThumbArea>
                    <WindowThumb kind="stolp" width={246} height={246} />
                  </ThumbArea>
                  <Caption>Rmeerkeuze stolp 25</Caption>
                </Cell>
                <Cell>
                  <ThumbArea>
                    <WindowThumb kind="horizontal" width={248} height={186} />
                  </ThumbArea>
                  <Caption>Rnx horizontaal 25</Caption>
                </Cell>
                <Cell>
                  <PeekThumb />
                </Cell>
                <RedBox $top={37} $h={334} />
                <RedBox $top={383} $h={304} />
                <RedArrow width="28" height="312" viewBox="0 0 28 312">
                  <path d="M14 2v290" stroke="#e8371f" strokeWidth="5" strokeLinecap="round" />
                  <path d="M0 286h28l-14 26z" fill="#e8371f" />
                </RedArrow>
              </GridPanel>
              <ScrollTrack>
                <ScrollThumb $top={335} $h={248} />
              </ScrollTrack>
            </ListBlock>
            <BottomBar>
              <IconButton $w={56} $h={45}>
                <LibraryGlyph />
              </IconButton>
              <PlainButton $w={235}>Empty Opening</PlainButton>
            </BottomBar>
          </LeftPanel>
          <Splitter>
            <SplitterArrow />
          </Splitter>
          <RightPanel>
            <TopRow>
              <ElementName>Rmeerkeuze 25</ElementName>
              <DefaultTag>Default</DefaultTag>
            </TopRow>
            <SectionBar>
              <Triangle $open />
              <SectionIcon>
                <PreviewMark />
              </SectionIcon>
              <SectionTitle>PREVIEW AND POSITIONING</SectionTitle>
            </SectionBar>
            <PreviewBody>
              <FieldsColumn>
                <FieldRow $h={62}>
                  <FieldIcon>
                    <WidthIcon />
                  </FieldIcon>
                  <ValueField $w={210}>1000,0</ValueField>
                  <RoundChevron $ml={16}>{MORE}</RoundChevron>
                </FieldRow>
                <FieldRow $h={48} $mt={15}>
                  <FieldIcon>
                    <HeightIcon />
                  </FieldIcon>
                  <ValueField $w={210}>2000,0</ValueField>
                  <RoundChevron $ml={16}>{MORE}</RoundChevron>
                </FieldRow>
                <PlainLabel>Anchors:</PlainLabel>
                <AnchorLabelRow $mt={20}>
                  Sill to Story 0<RoundChevron $ml={13}>{MORE}</RoundChevron>
                </AnchorLabelRow>
                <FieldRow $h={56} $mt={10} $align="flex-start">
                  <FieldIcon>
                    <SillIcon />
                  </FieldIcon>
                  <ValueField $w={252}>800,0</ValueField>
                </FieldRow>
                <AnchorLabelRow $mt={26}>
                  Reveal to Wall Face<RoundChevron $ml={13}>{MORE}</RoundChevron>
                </AnchorLabelRow>
                <FieldRow $h={40} $mt={10}>
                  <FieldIcon>
                    <RevealIcon />
                  </FieldIcon>
                  <ValueField $w={252}>0,0</ValueField>
                </FieldRow>
                <AnchorButtons>
                  <AnchorOn>
                    <AnchorPair />
                  </AnchorOn>
                  <AnchorSlot $w={34}>
                    <AnchorSmall spark flip />
                  </AnchorSlot>
                  <AnchorSlot $w={30}>
                    <AnchorSmall />
                  </AnchorSlot>
                  <AnchorSlot $w={24}>
                    <AnchorSmall flip />
                  </AnchorSlot>
                  <AnchorSlot $w={40}>
                    <AnchorSmall spark />
                  </AnchorSlot>
                </AnchorButtons>
              </FieldsColumn>
              <VerticalRule />
              <PreviewSide>
                <PreviewTop>
                  <ViewStrip>
                    <ViewSlot>
                      <CropIcon />
                    </ViewSlot>
                    <ViewSlot $mt={4}>
                      <GridIcon />
                    </ViewSlot>
                    <ViewSlot $on $mt={-1}>
                      <CubeIcon />
                    </ViewSlot>
                    <ViewSlot $mt={5}>
                      <FilmIcon />
                    </ViewSlot>
                    <ViewSlot $mt={7}>
                      <Info size={38} strokeWidth={1.7} />
                    </ViewSlot>
                  </ViewStrip>
                  <PreviewBox>
                    <Window3D />
                  </PreviewBox>
                </PreviewTop>
                <FlipRow>
                  <FlipIcon />
                  <FlipButton>Flip</FlipButton>
                  <ViewSlot $on $w={57}>
                    <SlantIcon split />
                  </ViewSlot>
                  <AnchorSlot $w={42} $ml={11}>
                    <SlantIcon />
                  </AnchorSlot>
                </FlipRow>
              </PreviewSide>
            </PreviewBody>
            <SectionBar>
              <Triangle $open />
              <SectionIcon>
                <SettingsMark />
              </SectionIcon>
              <SectionTitle>INSTELLINGEN RAAM</SectionTitle>
            </SectionBar>
            <NavRow>
              <NavButton>
                <svg width="14" height="22" viewBox="0 0 14 22">
                  <path d="M13 0v22L0 11z" fill={INK} />
                </svg>
              </NavButton>
              <NavButton>
                <svg width="14" height="22" viewBox="0 0 14 22">
                  <path d="M1 0v22l13-11z" fill={INK} />
                </svg>
              </NavButton>
              <NavButton $dim>
                <svg width="32" height="32" viewBox="0 0 32 32" fill="none">
                  <path d="M3 9h15v21H3zM6 14h9M6 18h9M6 22h9M6 26h5" stroke="#8d8f90" strokeWidth="1.800" />
                  <path d="M20 20q5-3 5-14M21 7l4-6 4 6" stroke="#8fb2f5" strokeWidth="2.400" />
                </svg>
              </NavButton>
              <NavWide>
                <svg width="18" height="28" viewBox="0 0 18 28" fill="none" stroke={INK} strokeWidth="2">
                  <rect x="1" y="1" width="16" height="26" rx="2" />
                  <path d="M1 8h16M1 16h16M9 8v19" />
                </svg>
                <NavWideText>Vorm...</NavWideText>
                <ChevronRight size={24} strokeWidth={2.6} />
              </NavWide>
            </NavRow>
            <Rule $mt={8} />
            <CheckGrid>
              <CheckRow>
                <CheckBox $on>
                  <Tick />
                </CheckBox>
                Bovenlicht
              </CheckRow>
              <CheckRow>
                <CheckBox />
                Zijlicht tot boven
              </CheckRow>
              <CheckRow>
                <CheckBox $on>
                  <Tick />
                </CheckBox>
                Onderlicht
              </CheckRow>
              <CheckRow>
                <CheckBox />
                Zijlicht tot beneden
              </CheckRow>
              <CheckRow>
                <CheckBox $on>
                  <Tick />
                </CheckBox>
                Zijlicht
              </CheckRow>
            </CheckGrid>
            <PanelsRow>
              <PanelsLabel $w={222}>Horizontale panelen</PanelsLabel>
              <SelectBox $w={197}>
                Afmetingen...
                <StepperMark />
              </SelectBox>
              <PanelsLabel $w={239}>Verticale panelen</PanelsLabel>
              <SelectBox $w={198}>
                Asymmetrisch
                <StepperMark />
              </SelectBox>
            </PanelsRow>
            <Rule $w="888px" $mt={17} />
            <DiagramCanvas>
              <Diagram />
              <CanvasItem $x={164} $y={206}>
                <ValueField $w={100} $h={34} $pad={8}>
                  400,0
                </ValueField>
              </CanvasItem>
              <CanvasItem $x={274} $y={208}>
                <RoundChevron>{MORE}</RoundChevron>
              </CanvasItem>
              <CanvasItem $x={592} $y={137}>
                <FocusRing>
                  <FocusInner>
                    <SelectedText>1600,0</SelectedText>
                  </FocusInner>
                </FocusRing>
              </CanvasItem>
              <CanvasItem $x={708} $y={144}>
                <RoundChevron>{MORE}</RoundChevron>
              </CanvasItem>
            </DiagramCanvas>
            <SectionStack>
              {sectionsBelow.map((s) => (
                <SectionBar key={s.title}>
                  <Triangle $off={s.off} />
                  <SectionIcon $off={s.off}>{s.icon}</SectionIcon>
                  <SectionTitle $off={s.off}>{s.title}</SectionTitle>
                </SectionBar>
              ))}
            </SectionStack>
            <Rule $mt={25} />
            <Footer>
              <CancelButton>Cancel</CancelButton>
              <OkButton>OK</OkButton>
            </Footer>
          </RightPanel>
        </Main>
      </Win>
    </>
  );
}
